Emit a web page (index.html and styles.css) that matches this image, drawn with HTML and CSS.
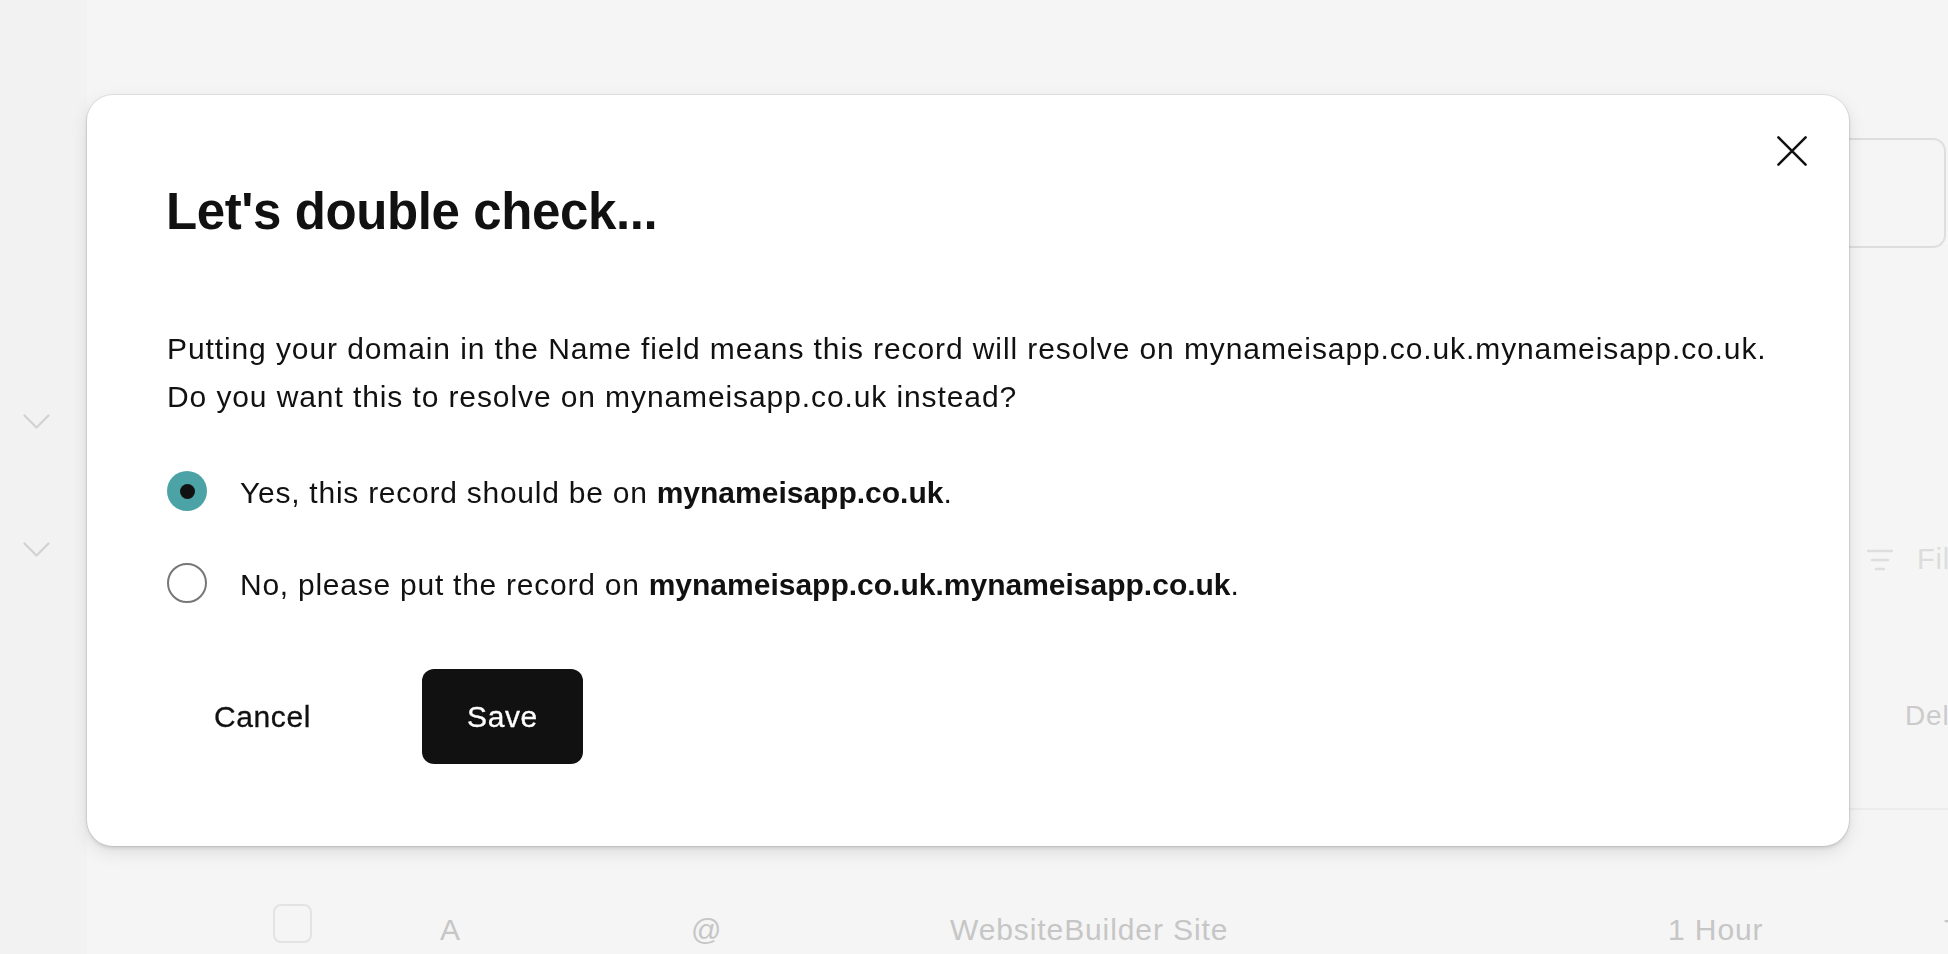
FILE: index.html
```html
<!DOCTYPE html>
<html lang="en">
<head>
<meta charset="utf-8">
<title>Let's double check...</title>
<link rel="stylesheet" href="styles.css">
</head>
<body>
<div class="page">
  <aside class="sidebar">
    <svg class="chev" viewBox="0 0 27 15" width="27" height="15"><path d="M1.5 1.5 L13.5 13.5 L25.5 1.5" fill="none" stroke="#d2d2d2" stroke-width="2.2" stroke-linecap="round" stroke-linejoin="round"/></svg>
    <svg class="chev chev-2" viewBox="0 0 27 15" width="27" height="15"><path d="M1.5 1.5 L13.5 13.5 L25.5 1.5" fill="none" stroke="#d2d2d2" stroke-width="2.2" stroke-linecap="round" stroke-linejoin="round"/></svg>
  </aside>
  <main class="main">
    <div class="search-wrap"><div class="search-box"></div></div>
    <div class="filter-row">
      <svg class="filter-icon" viewBox="0 0 26 22" width="26" height="22"><path d="M1 2h24M5 11h16M9 20h8" stroke="#dedede" stroke-width="2.4" stroke-linecap="round"/></svg>
      <span class="filter-text">Filter</span>
    </div>
    <div class="delete-row"><span class="delete-text">Delete</span></div>
    <div class="divider"></div>
    <div class="record-row">
      <span class="check"></span>
      <span class="cell">A</span>
      <span class="cell">@</span>
      <span class="cell">WebsiteBuilder Site</span>
      <span class="cell">1 Hour</span>
      <span class="cell">T</span>
    </div>
  </main>
</div>

<div class="overlay">
  <div class="modal" role="dialog" aria-labelledby="dlg-title">
    <button class="close" aria-label="Close">
      <svg viewBox="0 0 30 30" width="30" height="30"><path d="M1.4 1.4 L28.6 28.6 M28.6 1.4 L1.4 28.6" stroke="#111" stroke-width="2.5" stroke-linecap="round"/></svg>
    </button>
    <h2 class="title" id="dlg-title">Let's double check...</h2>
    <p class="message">Putting your domain in the Name field means this record will resolve on mynameisapp.co.uk.mynameisapp.co.uk.<br>Do you want this to resolve on mynameisapp.co.uk instead?</p>
    <div class="options">
      <label class="option">
        <span class="radio radio-on"><span class="dot"></span></span>
        <span class="opt-text">Yes, this record should be on <b>mynameisapp.co.uk</b>.</span>
      </label>
      <label class="option">
        <span class="radio"></span>
        <span class="opt-text">No, please put the record on <b>mynameisapp.co.uk.mynameisapp.co.uk</b>.</span>
      </label>
    </div>
    <div class="actions">
      <button class="btn btn-cancel">Cancel</button>
      <button class="btn btn-save">Save</button>
    </div>
  </div>
</div>
</body>
</html>
```

FILE: styles.css
```css
* { box-sizing: border-box; }

html, body {
  margin: 0;
  padding: 0;
  width: 1948px;
  height: 954px;
  overflow: hidden;
}

body {
  font-family: "Liberation Sans", Arial, sans-serif;
  color: #111111;
  background: #f3f3f3;
}

/* ---------- background page (dimmed) ---------- */
.page {
  display: flex;
  width: 1948px;
  height: 954px;
}

.sidebar {
  width: 87px;
  flex: none;
  background: #f2f2f2;
  padding: 414px 0 0 23px;
  display: flex;
  flex-direction: column;
  align-items: flex-start;
}

.chev { display: block; }
.chev-2 { margin-top: 113px; }

.main {
  flex: 1;
  min-width: 0;
  overflow: hidden;
  background: #f5f5f5;
  display: flex;
  flex-direction: column;
}

.search-wrap {
  padding-top: 138px;
  display: flex;
  justify-content: flex-end;
  padding-right: 2px;
}

.search-box {
  width: 846px;
  height: 110px;
  border: 2px solid #dedede;
  border-radius: 13px;
}

.filter-row {
  margin-top: 293px;
  height: 40px;
  display: flex;
  align-items: center;
  gap: 24px;
  padding-left: 1780px;
  white-space: nowrap;
}

.filter-icon { display: block; flex: none; }

.filter-text {
  font-size: 29px;
  letter-spacing: 0.8px;
  color: #dcdcdc;
}

.delete-row {
  margin-top: 118px;
  height: 40px;
  line-height: 40px;
  padding-left: 1818px;
  white-space: nowrap;
}

.delete-text {
  font-size: 28px;
  letter-spacing: 0.8px;
  color: #cbcbcb;
}

.divider {
  margin-top: 72px;
  height: 2px;
  background: #ececec;
  margin-left: 1762px;
}

.record-row {
  margin-top: 94px;
  padding-left: 186px;
  display: grid;
  grid-template-columns: 167px 251px 259px 718px 276px 1fr;
  align-items: start;
  white-space: nowrap;
}

.check {
  width: 39px;
  height: 39px;
  border: 2px solid #e3e3e3;
  border-radius: 8px;
}

.cell {
  margin-top: 2px;
  font-size: 30px;
  line-height: 48px;
  letter-spacing: 0.9px;
  color: #c6c6c6;
}

/* ---------- modal ---------- */
.overlay {
  position: fixed;
  inset: 0;
  padding: 95px 0 0 87px;
}

.modal {
  position: relative;
  width: 1762px;
  height: 751px;
  background: #ffffff;
  border-radius: 26px;
  box-shadow: 0 0 0 1px rgba(0, 0, 0, 0.07),
              0 2px 4px rgba(0, 0, 0, 0.12),
              0 6px 18px rgba(0, 0, 0, 0.10);
  padding: 87px 60px 0 80px;
}

.close {
  position: absolute;
  top: 41px;
  right: 42px;
  width: 30px;
  height: 30px;
  padding: 0;
  border: 0;
  background: none;
  cursor: pointer;
}

.close svg { display: block; }

.title {
  margin: 0 0 0 -1px;
  font-size: 51px;
  line-height: 60px;
  font-weight: 700;
  letter-spacing: -0.4px;
  color: #111111;
}

.message {
  margin: 83px 0 0 0;
  font-size: 30px;
  line-height: 48px;
  letter-spacing: 0.9px;
  color: #111111;
  white-space: nowrap;
}

.options {
  margin-top: 50px;
  display: flex;
  flex-direction: column;
  gap: 52px;
}

.option {
  display: flex;
  align-items: center;
  height: 40px;
  gap: 33px;
  white-space: nowrap;
}

.radio {
  width: 40px;
  height: 40px;
  flex: none;
  border-radius: 50%;
  border: 2px solid #777777;
  background: #ffffff;
  display: flex;
  align-items: center;
  justify-content: center;
}

.radio-on {
  border: 0;
  background: #4ca3a6;
}

.dot {
  width: 15px;
  height: 15px;
  border-radius: 50%;
  background: #111111;
}

.opt-text {
  font-size: 30px;
  line-height: 40px;
  padding-top: 3px;
  letter-spacing: 0.75px;
  color: #111111;
}

.opt-text b {
  font-weight: 700;
  letter-spacing: 0;
}

.actions {
  margin-top: 66px;
  margin-left: -3px;
  display: flex;
  align-items: center;
  gap: 61px;
}

.btn {
  height: 95px;
  border: 0;
  font-family: "Liberation Sans", Arial, sans-serif;
  font-weight: 400;
  font-size: 30px;
  letter-spacing: 0.6px;
  cursor: pointer;
  padding: 0;
  -webkit-text-stroke: 0.3px currentColor;
}

.btn-cancel {
  width: 197px;
  background: transparent;
  color: #111111;
}

.btn-save {
  width: 161px;
  background: #111111;
  color: #ffffff;
  border-radius: 12px;
}
```
